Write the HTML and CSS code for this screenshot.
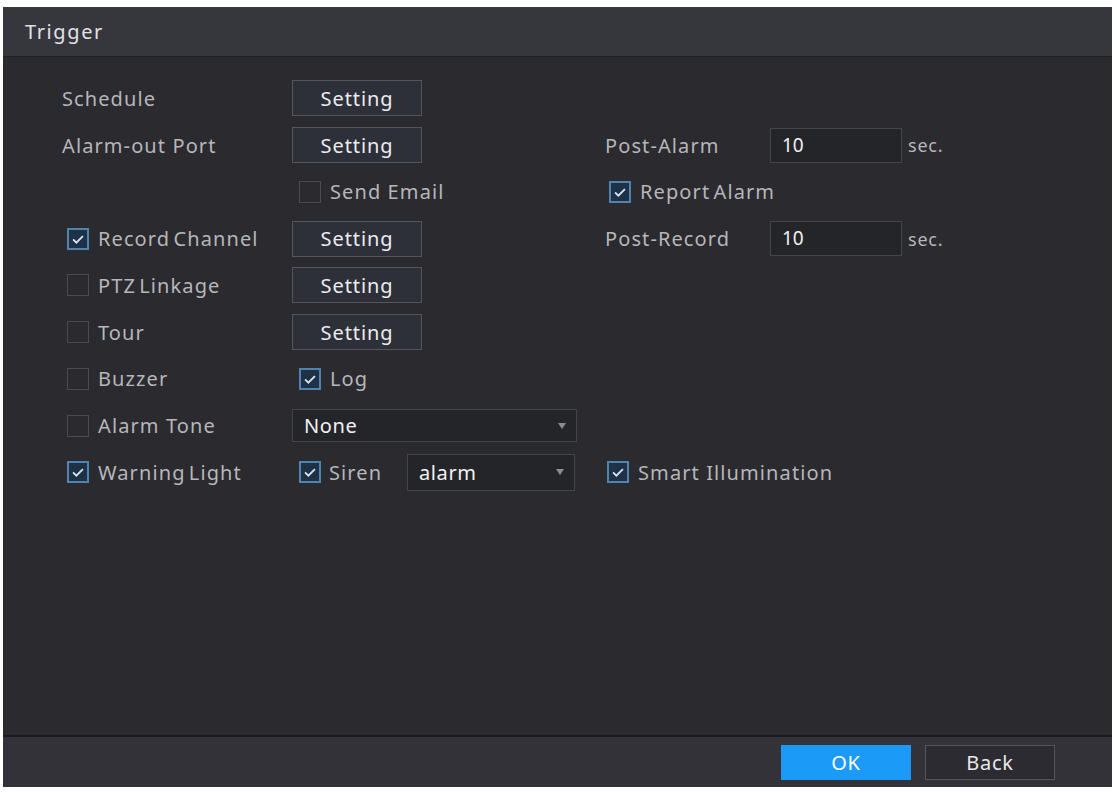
FILE: index.html
```html
<!DOCTYPE html>
<html>
<head>
<meta charset="utf-8">
<title>Trigger</title>
<link rel="stylesheet" href="styles.css">
</head>
<body>
<div class="panel">
  <div class="header">Trigger</div>
  <div class="content">
    <div class="row">
      <div class="label">Schedule</div>
      <div class="cell"><button class="btn">Setting</button></div>
    </div>
    <div class="row">
      <div class="label">Alarm-out Port</div>
      <div class="cell"><button class="btn">Setting</button></div>
      <div class="label">Post-Alarm</div>
      <div class="cell"><div class="input">10</div><span class="unit">sec.</span></div>
    </div>
    <div class="row">
      <div></div>
      <div class="cell c2"><span class="chk"></span><span class="txt">Send Email</span></div>
      <div class="cell c3 span"><span class="chk on"><svg viewBox="0 0 22 22"><path d="M5 11.5l4 4 8-8"/></svg></span><span class="txt tight">Report Alarm</span></div>
    </div>
    <div class="row">
      <div class="cell c1"><span class="chk on"><svg viewBox="0 0 22 22"><path d="M5 11.5l4 4 8-8"/></svg></span><span class="txt tight">Record Channel</span></div>
      <div class="cell"><button class="btn">Setting</button></div>
      <div class="label">Post-Record</div>
      <div class="cell"><div class="input">10</div><span class="unit">sec.</span></div>
    </div>
    <div class="row">
      <div class="cell c1"><span class="chk"></span><span class="txt tight">PTZ Linkage</span></div>
      <div class="cell"><button class="btn">Setting</button></div>
    </div>
    <div class="row">
      <div class="cell c1"><span class="chk"></span><span class="txt">Tour</span></div>
      <div class="cell"><button class="btn">Setting</button></div>
    </div>
    <div class="row">
      <div class="cell c1"><span class="chk"></span><span class="txt">Buzzer</span></div>
      <div class="cell c2"><span class="chk on"><svg viewBox="0 0 22 22"><path d="M5 11.5l4 4 8-8"/></svg></span><span class="txt">Log</span></div>
    </div>
    <div class="row">
      <div class="cell c1"><span class="chk"></span><span class="txt">Alarm Tone</span></div>
      <div class="cell"><div class="select wide"><span>None</span><span class="arrow"></span></div></div>
    </div>
    <div class="row">
      <div class="cell c1"><span class="chk on"><svg viewBox="0 0 22 22"><path d="M5 11.5l4 4 8-8"/></svg></span><span class="txt tight">Warning Light</span></div>
      <div class="cell c2"><span class="chk on"><svg viewBox="0 0 22 22"><path d="M5 11.5l4 4 8-8"/></svg></span><span class="txt siren">Siren</span><div class="select small"><span>alarm</span><span class="arrow"></span></div></div>
      <div class="cell c3b span"><span class="chk on"><svg viewBox="0 0 22 22"><path d="M5 11.5l4 4 8-8"/></svg></span><span class="txt">Smart Illumination</span></div>
    </div>
  </div>
  <div class="footer">
    <button class="fbtn ok">OK</button>
    <button class="fbtn back">Back</button>
  </div>
</div>
</body>
</html>
```
FILE: styles.css
```css
html, body {
  margin: 0;
  padding: 0;
  background: #ffffff;
}
body {
  font-family: "Noto Sans", "Open Sans", sans-serif;
  width: 1117px;
  height: 792px;
  overflow: hidden;
}
.panel {
  margin: 7px 0 0 3px;
  width: 1109px;
  height: 780px;
  background: #2a2a2f;
  display: flex;
  flex-direction: column;
}
.header {
  height: 50px;
  border-bottom: 1px solid #1f1f23;
  background: #36373c;
  color: #e2e2e4;
  font-size: 20px;
  letter-spacing: 1.6px;
  padding-left: 22px;
  line-height: 49px;
  box-sizing: border-box;
}
.content {
  flex: 1;
  padding: 18px 0 0 59px;
  box-sizing: border-box;
}
.row {
  display: grid;
  grid-template-columns: 230px 313px 165px 1fr;
  height: 46.75px;
  align-items: center;
}
.label {
  color: #b6b7ba;
  font-size: 20px;
  letter-spacing: 1.1px;
  white-space: nowrap;
}
.cell {
  display: flex;
  align-items: center;
  white-space: nowrap;
}
.span {
  grid-column: 3 / 5;
}
.txt {
  color: #b6b7ba;
  font-size: 20px;
  letter-spacing: 1.1px;
  margin-left: 9px;
}
.txt.tight {
  word-spacing: -3px;
}
.c1 { padding-left: 5px; }
.c2 { padding-left: 7px; }
.c3 { padding-left: 4px; }
.c3b { padding-left: 2px; }
.chk {
  width: 22px;
  height: 22px;
  box-sizing: border-box;
  border: 1px solid #4a4b50;
  display: inline-flex;
  align-items: center;
  justify-content: center;
  flex: none;
}
.chk.on {
  border: 2px solid #4f84ae;
  background: #1f3146;
}
.chk svg {
  width: 18px;
  height: 18px;
}
.chk svg path {
  fill: none;
  stroke: #d7e6f4;
  stroke-width: 2.2;
}
.btn {
  width: 130px;
  height: 36px;
  background: #2e3039;
  border: 1px solid #54565c;
  color: #ececee;
  font-family: "Noto Sans", "Open Sans", sans-serif;
  font-size: 20px;
  letter-spacing: 0.9px;
  padding: 0;
}
.input {
  width: 132px;
  height: 35px;
  box-sizing: border-box;
  background: #242529;
  border: 1px solid #44454a;
  color: #f0f0f2;
  font-size: 19px;
  padding-left: 11px;
  line-height: 33px;
}
.unit {
  color: #b6b7ba;
  font-size: 18px;
  margin-left: 6px;
  letter-spacing: 0.8px;
}
.select {
  display: flex;
  align-items: center;
  justify-content: space-between;
  box-sizing: border-box;
  background: #242529;
  border: 1px solid #44454a;
  color: #f2f2f4;
  font-size: 20px;
  letter-spacing: 0.6px;
  padding: 0 10px 0 11px;
}
.select.wide {
  width: 285px;
  height: 33px;
}
.select.small {
  width: 168px;
  height: 37px;
  margin-left: auto;
  margin-right: 30px;
}
.siren { margin-left: 8px; }
.arrow {
  width: 0;
  height: 0;
  border-left: 4px solid transparent;
  border-right: 4px solid transparent;
  border-top: 6px solid #8b8c90;
}
.footer {
  height: 52px;
  border-top: 2px solid #1b1b1f;
  background: #333239;
  display: flex;
  justify-content: flex-end;
  align-items: center;
  gap: 14px;
  padding-right: 57px;
  box-sizing: border-box;
}
.fbtn {
  width: 130px;
  height: 35px;
  font-family: "Noto Sans", "Open Sans", sans-serif;
  font-size: 20px;
  letter-spacing: 0.8px;
  padding: 0;
}
.fbtn.ok {
  background: #1c9af7;
  border: 1px solid #1c9af7;
  color: #ffffff;
}
.fbtn.back {
  background: #2b2b31;
  border: 1px solid #55565c;
  color: #e8e8ea;
}
```
